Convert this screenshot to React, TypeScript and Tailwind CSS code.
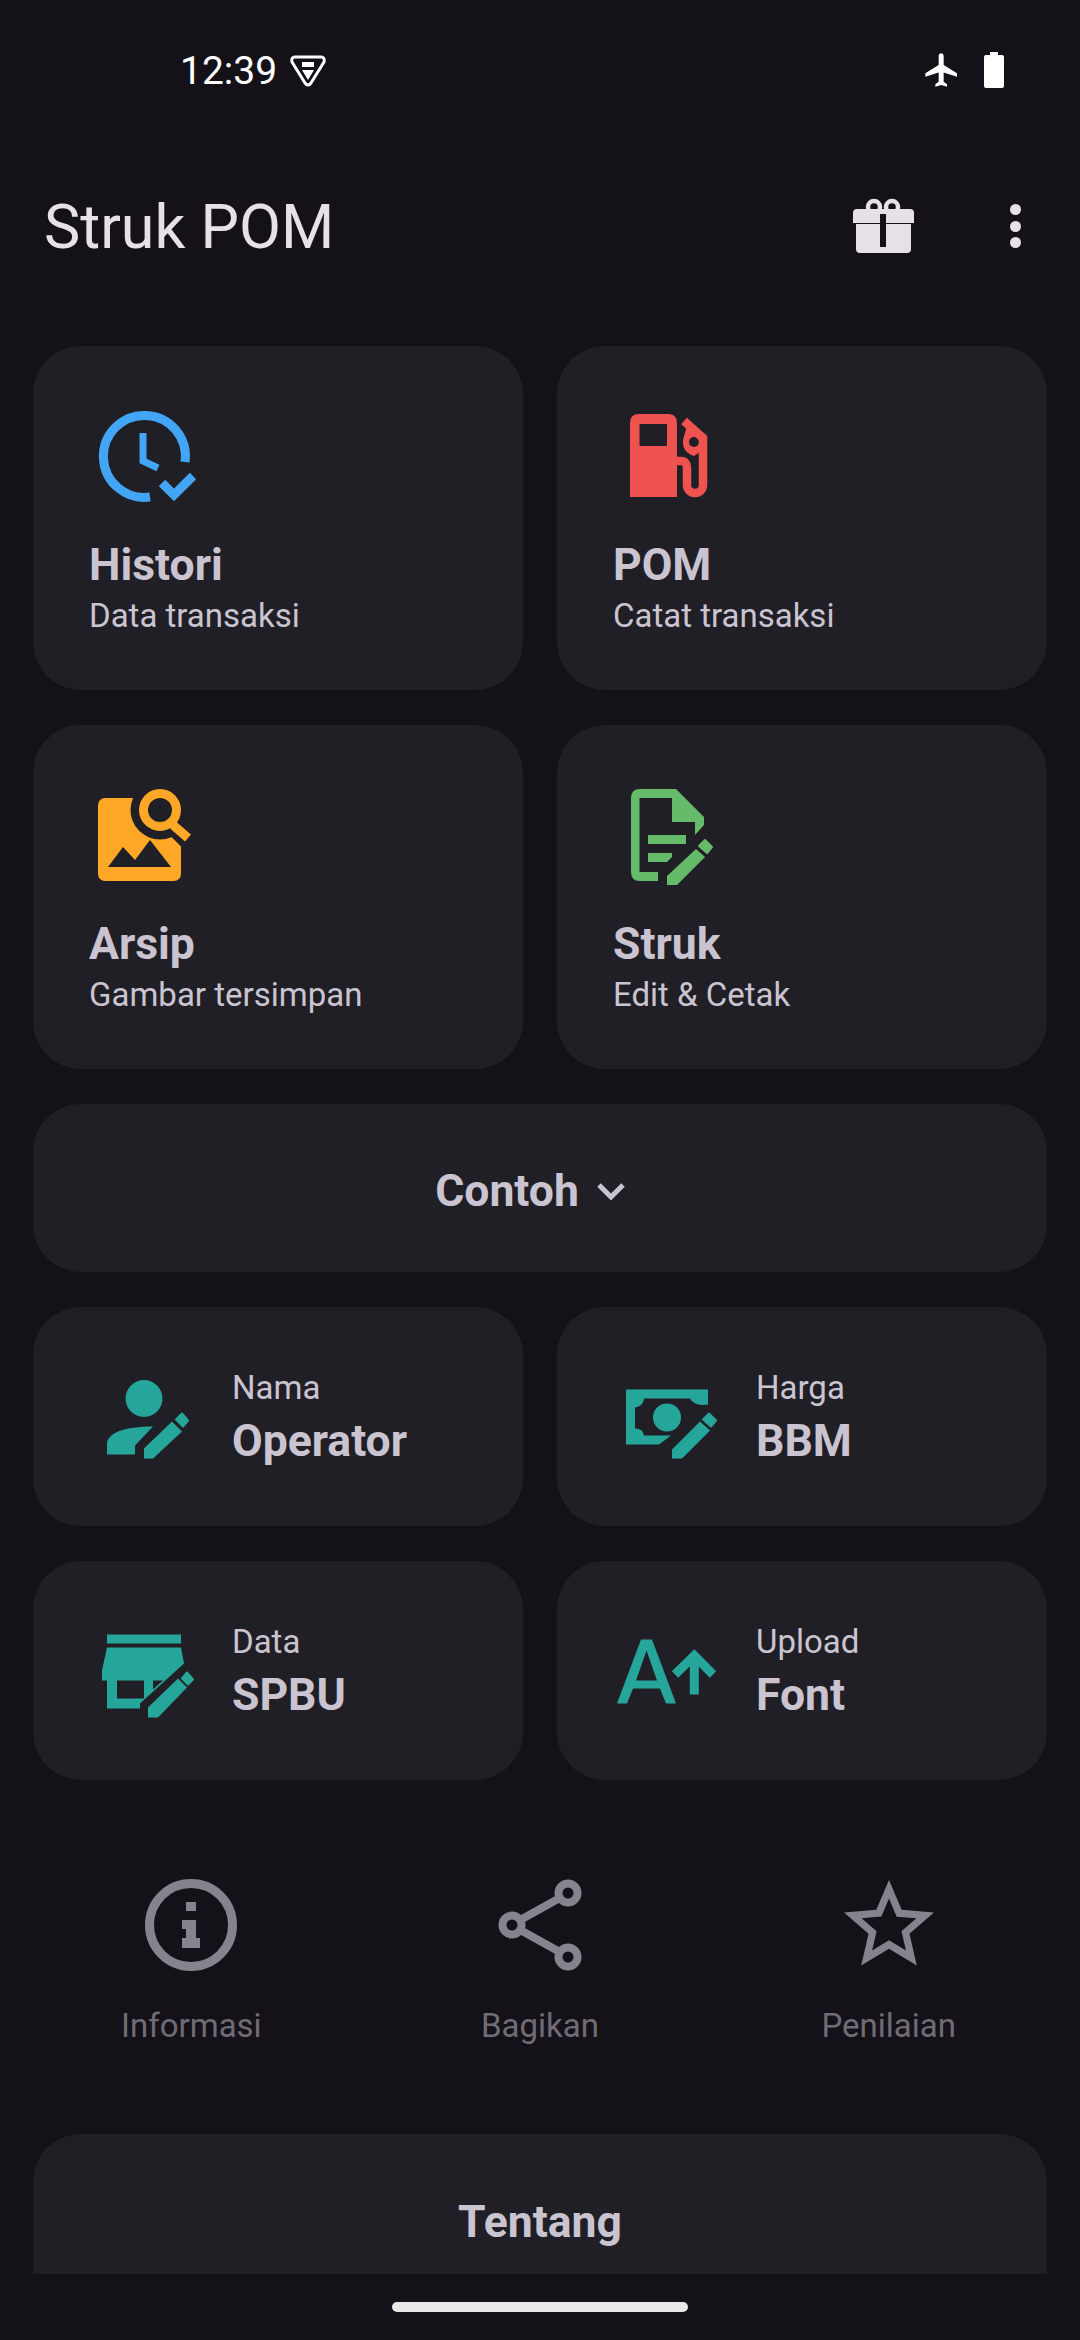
import React from "react";

const Pencil = ({ body, tip }: { body: string; tip: string }) => (
  <>
    <polygon points={body} />
    <polygon points={tip} strokeLinejoin="round" stroke="currentColor" strokeWidth="2" />
  </>
);

function ClockIcon() {
  return (
    <svg viewBox="0 11 200 130" className="w-[200px] h-[130px] text-[#42a5f5]" fill="none" stroke="currentColor">
      <path d="M125 82A41 41 0 1 0 90 117" strokeWidth="9" />
      <path d="M83 53V81L98 88" strokeWidth="7" />
      <path d="M102 103L114 115L133 96" strokeWidth="9" />
    </svg>
  );
}

function PumpIcon() {
  return (
    <svg viewBox="-6 11 200 130" className="w-[200px] h-[130px] text-[#ef5350]" fill="currentColor">
      <path fillRule="evenodd" d="M49 34H78Q87 34 87 43V117H40V43Q40 34 49 34ZM49.500 44V66H77V44Z" />
      <path d="M87 81H91Q97 81 97 88V105A8 8 0 0 0 113 105V58L94 41" fill="none" stroke="currentColor" strokeWidth="8.500" />
      <path fillRule="evenodd" d="M97 46L113 58V70L104 76Q92 72 93 60ZM104 57A5 5 0 1 0 104.010 67A5 5 0 1 0 104 57Z" />
    </svg>
  );
}

function ArchiveIcon() {
  return (
    <svg viewBox="0 0 200 130" className="w-[200px] h-[130px] text-[#ffa726]">
      <rect x="38" y="28" width="83" height="83" rx="7" fill="currentColor" />
      <circle cx="100" cy="40" r="29.500" fill="#211f26" />
      <path d="M113 53L132 72" stroke="#211f26" strokeWidth="22" />
      <path d="M48 97L63 77L75 90L90 70L111 97Z" fill="#211f26" />
      <circle cx="100" cy="40" r="16.500" fill="none" stroke="currentColor" strokeWidth="9" />
      <path d="M113 55L128 68" stroke="currentColor" strokeWidth="9" />
    </svg>
  );
}

function StrukIcon() {
  return (
    <svg viewBox="-6 0 200 130" className="w-[200px] h-[130px] text-[#66bb6a]" fill="currentColor">
      <path d="M50 19H86L114 47V55L105 65V52H82V28H49.500V102H68V111H50Q41 111 41 102V28Q41 19 50 19Z" />
      <path d="M58 65H96V74H58Z" />
      <path d="M58 83H82V87L77 92H58Z" />
      <Pencil body="106,79 115,87 87,115 77,115 77,106" tip="115,70 122,77 117,83 109,76" />
    </svg>
  );
}

function PersonIcon() {
  return (
    <svg viewBox="0 1.500 140 110" className="w-[140px] h-[110px] text-[#26a69a]" fill="currentColor">
      <circle cx="64" cy="38" r="18.500" />
      <path d="M27 94V84C27 72 45 66 73 66L55 85V94Z" />
      <Pencil body="92,61 102,71 73,98 64,98 64,88" tip="102,53 108,60 103,66 96,59" />
    </svg>
  );
}

function MoneyIcon() {
  return (
    <svg viewBox="4 1.500 140 110" className="w-[140px] h-[110px] text-[#26a69a]" fill="currentColor">
      <path d="M26 29H108V44Q94 46 90 38H44Q43 46 35 47V68Q43 68 44 75H71L59 84H26Z" />
      <circle cx="67" cy="57" r="14" />
      <Pencil body="100,61 110,70 82,98 72,98 72,89" tip="109,53 116,60 111,66 103,59" />
    </svg>
  );
}

function ShopIcon() {
  return (
    <svg viewBox="0 5.500 140 110" className="w-[140px] h-[110px] text-[#26a69a]" fill="currentColor">
      <path d="M27 24H101V33H27Z" />
      <path fillRule="evenodd" d="M27 37H101L104 53L60 93V98H27V70H22V60ZM37 70V88H64V70ZM73 70V79L83 70Z" />
      <Pencil body="98,68 107,77 78,107 68,107 68,97" tip="107,62 113,69 108,74 102,68" />
    </svg>
  );
}

function FontIcon() {
  return (
    <svg viewBox="4 5.500 140 110" className="w-[140px] h-[110px] text-[#26a69a]" fill="currentColor">
      <path fillRule="evenodd" d="M17 93L41 29H52L76 93H66L60 78H33L27 93ZM36 70H57L46.500 40Z" />
      <path d="M94.300 84V46M75 64L94.300 45L113 64" fill="none" stroke="currentColor" strokeWidth="9" />
    </svg>
  );
}

function InfoIcon() {
  return (
    <svg viewBox="0 0 108 108" className="w-[108px] h-[108px] text-[#86838c]" fill="currentColor">
      <circle cx="54" cy="54" r="41.500" fill="none" stroke="currentColor" strokeWidth="9" />
      <path d="M49 31H59V40H49Z" />
      <path d="M45 49H59V67H63V77H45V67H49V58H45Z" />
    </svg>
  );
}

function ShareIcon() {
  return (
    <svg viewBox="0 0 108 108" className="w-[108px] h-[108px] text-[#86838c]" fill="none" stroke="currentColor" strokeWidth="8">
      <circle cx="82" cy="22" r="9.500" />
      <circle cx="26" cy="54" r="9.500" />
      <circle cx="82" cy="86" r="9.500" />
      <path d="M36 48L72 28M36 60L72 80" />
    </svg>
  );
}

function StarIcon() {
  return (
    <svg viewBox="0 0 24 24" className="w-[108px] h-[108px] text-[#86838c]" fill="currentColor">
      <path d="M22 9.240l-7.190-.62L12 2 9.190 8.630 2 9.240l5.460 4.730L5.820 21 12 17.270 18.180 21l-1.630-7.030L22 9.240zM12 15.400l-3.760 2.270 1-4.280-3.320-2.880 4.380-.38L12 6.100l1.710 4.040 4.380.38-3.320 2.880 1 4.280L12 15.400z" />
    </svg>
  );
}

function GiftIcon() {
  return (
    <svg viewBox="0 0 61 56" className="w-[61px] h-[56px] text-[#e6e0e9]" fill="currentColor">
      <circle cx="21" cy="9" r="6" fill="none" stroke="currentColor" strokeWidth="4.500" />
      <circle cx="39" cy="9" r="6" fill="none" stroke="currentColor" strokeWidth="4.500" />
      <path d="M4 11H57Q61 11 61 15V25H0V15Q0 11 4 11Z" />
      <path d="M3 26H58V51Q58 55 54 55H7Q3 55 3 51Z" />
      <path d="M27 16H33V49H27Z" fill="#141218" />
    </svg>
  );
}

const bigCards = [
  { icon: <ClockIcon />, title: "Histori", sub: "Data transaksi" },
  { icon: <PumpIcon />, title: "POM", sub: "Catat transaksi" },
  { icon: <ArchiveIcon />, title: "Arsip", sub: "Gambar tersimpan" },
  { icon: <StrukIcon />, title: "Struk", sub: "Edit & Cetak" },
];

const smallCards = [
  { icon: <PersonIcon />, top: "Nama", bottom: "Operator" },
  { icon: <MoneyIcon />, top: "Harga", bottom: "BBM" },
  { icon: <ShopIcon />, top: "Data", bottom: "SPBU" },
  { icon: <FontIcon />, top: "Upload", bottom: "Font" },
];

const actions = [
  { icon: <InfoIcon />, label: "Informasi" },
  { icon: <ShareIcon />, label: "Bagikan" },
  { icon: <StarIcon />, label: "Penilaian" },
];

export default function App() {
  return (
    <div className="w-[1080px] h-[2340px] overflow-hidden bg-[#141218] font-['Roboto',sans-serif]">
      {/* status bar */}
      <div className="h-[140px] flex items-center pl-[180px] pr-[76px] text-white">
        <span className="text-[39px] leading-[40px] mt-[2px]">12:39</span>
        <svg viewBox="0 0 36 32" className="w-[36px] h-[32px] ml-[13px] mt-[2px]" fill="none" stroke="white" strokeWidth="3">
          <path d="M5 2H31Q35 2 34 7L21 28Q18 32 15 28L2 7Q1 2 5 2Z" />
          <path d="M12 7H24V12H12ZM12 15H24L18 25Z" fill="white" stroke="none" />
        </svg>
        <div className="ml-auto flex items-center gap-[22px]">
          <svg viewBox="0 0 24 24" className="w-[40px] h-[40px]" fill="white">
            <path d="M21 16v-2l-8-5V3.500c0-.83-.67-1.500-1.500-1.500S10 2.670 10 3.500V9l-8 5v2l8-2.500V19l-2 1.500V22l3.500-1 3.500 1v-1.500L13 19v-5.500l8 2.500z" />
          </svg>
          <svg viewBox="0 0 20 36" className="w-[20px] h-[36px]" fill="white">
            <path d="M6 0H14V3H18Q20 3 20 5V34Q20 36 18 36H2Q0 36 0 34V5Q0 3 2 3H6Z" />
          </svg>
        </div>
      </div>

      {/* app bar */}
      <div className="h-[172px] flex items-center pl-[44px] pr-[59px]">
        <h1 className="text-[61px] leading-[72px] text-[#e6e0e9] font-normal mt-[2px]">Struk POM</h1>
        <div className="ml-auto flex items-center gap-[96px]">
          <GiftIcon />
          <div className="flex flex-col gap-[5.500px]">
            <span className="w-[11px] h-[11px] rounded-full bg-[#e6e0e9]" />
            <span className="w-[11px] h-[11px] rounded-full bg-[#e6e0e9]" />
            <span className="w-[11px] h-[11px] rounded-full bg-[#e6e0e9]" />
          </div>
        </div>
      </div>

      <div className="mt-[34px] px-[33px] flex flex-col gap-[35px]">
        <div className="grid grid-cols-2 gap-x-[34px] gap-y-[35px]">
          {bigCards.map((card) => (
            <div key={card.title} className="h-[344px] rounded-[48px] bg-[#211f26] pl-[27px] pt-[45px]">
              {card.icon}
              <div className="pl-[29px] mt-[18px]">
                <div className="text-[44.500px] leading-[52px] font-bold text-[#cac4d0]">{card.title}</div>
                <div className="text-[33px] leading-[40px] mt-[5px] text-[#cac4d0]">{card.sub}</div>
              </div>
            </div>
          ))}
        </div>

        <div className="h-[168px] rounded-[48px] bg-[#211f26] flex items-center justify-center pt-[6px] pr-[4px]">
          <span className="text-[44.500px] leading-[52px] font-bold text-[#cac4d0]">Contoh</span>
          <svg viewBox="0 0 60 48" className="w-[60px] h-[48px] ml-[2px]" fill="none" stroke="#cac4d0" strokeWidth="5">
            <path d="M18 18L30 30L42 18" />
          </svg>
        </div>

        <div className="grid grid-cols-2 gap-x-[34px] gap-y-[35px]">
          {smallCards.map((card) => (
            <div key={card.bottom} className="h-[219px] rounded-[48px] bg-[#211f26] pl-[47px] flex items-center gap-[12px]">
              {card.icon}
              <div className="pt-[2px]">
                <div className="text-[33px] leading-[40px] text-[#cac4d0]">{card.top}</div>
                <div className="text-[44.500px] leading-[52px] mt-[7px] font-bold text-[#cac4d0]">{card.bottom}</div>
              </div>
            </div>
          ))}
        </div>
      </div>

      <div className="mt-[91px] px-[17px] grid grid-cols-3">
        {actions.map((action) => (
          <div key={action.label} className="flex flex-col items-center">
            {action.icon}
            <span className="mt-[27px] text-[33px] leading-[40px] text-[#6f6c75]">{action.label}</span>
          </div>
        ))}
      </div>

      <div className="mt-[88px] mx-[33px] h-[140px] rounded-t-[48px] bg-[#211f26] flex items-center justify-center pt-[36px]">
        <span className="text-[44.500px] leading-[52px] font-bold text-[#cac4d0]">Tentang</span>
      </div>

      <div className="mt-[28px] mx-auto w-[296px] h-[10px] rounded-full bg-[#e8e8e8]" />
    </div>
  );
}
